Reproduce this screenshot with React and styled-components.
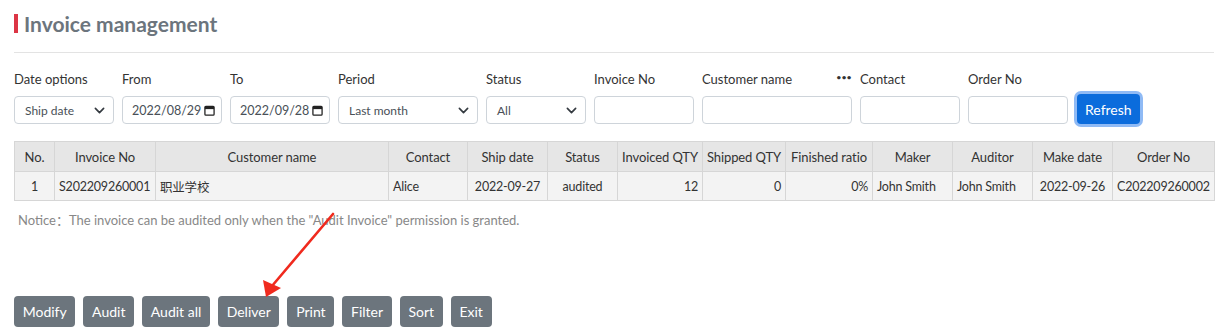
import React from 'react';
import styled, { createGlobalStyle } from 'styled-components';

const GlobalStyle = createGlobalStyle`
  body {
    margin: 0;
    background: #fff;
    font-family: Lato, "Noto Sans CJK SC", sans-serif;
    color: #333;
  }
`;

const Page = styled.div`
  position: relative;
  width: 1228px;
  height: 335px;
  padding: 14px 14px 0 14px;
  box-sizing: border-box;
  overflow: hidden;
`;

const Header = styled.div`
  display: flex;
  align-items: center;
  height: 19px;
  gap: 6px;
`;

const Bar = styled.span`
  width: 4px;
  height: 19px;
  background: #dc3545;
`;

const Title = styled.h1`
  margin: 0;
  font-size: 21px;
  line-height: 19px;
  font-weight: 700;
  color: #6c757d;
`;

const Divider = styled.div`
  height: 1px;
  background: #e3e3e3;
  margin-top: 19px;
  width: 1200px;
`;

const Filters = styled.div`
  display: flex;
  align-items: flex-end;
  gap: 8px;
  margin-top: 17px;
`;

const Field = styled.div`
  display: flex;
  flex-direction: column;
  gap: 8px;
  width: ${p => p.w || 100}px;
`;

const LabelRow = styled.div`
  display: flex;
  justify-content: space-between;
  align-items: center;
  height: 18px;
  font-size: 13px;
  color: #333;
`;

const More = styled.span`
  font-size: 8px;
  letter-spacing: 0.5px;
  font-weight: 700;
  color: #333;
  margin-top: -4px;
`;

const Box = styled.div`
  display: flex;
  align-items: center;
  justify-content: space-between;
  height: 28px;
  box-sizing: border-box;
  border: 1px solid #ced4da;
  border-radius: 4px;
  padding: 0 ${p => p.pr || 8}px 0 ${p => p.pl || 10}px;
  font-size: ${p => p.fs || 12}px;
  color: #495057;
  background: #fff;
`;

const RefreshButton = styled.button`
  height: 30px;
  padding: 0 8px;
  border: none;
  border-radius: 4px;
  background: #0b6cdc;
  color: #fff;
  font-family: inherit;
  font-size: 14px;
  box-shadow: 0 0 0 3px #8fbaf5;
  margin-left: 1px;
`;

const Table = styled.table`
  margin-top: 17px;
  border-collapse: collapse;
  font-size: 13px;
  color: #333;
  table-layout: fixed;
  width: 1200px;
`;

const Th = styled.th`
  background: #e6e6e6;
  font-weight: 400;
  height: 29px;
  padding: 0 3px;
  border: 1px solid #d6d6d6;
  text-align: center;
  white-space: nowrap;
  overflow: hidden;
  letter-spacing: -0.1px;
`;

const Td = styled.td`
  background: #f3f3f3;
  height: 28px;
  padding: 0 4px;
  border: 1px solid #d6d6d6;
  font-size: 12.5px;
  letter-spacing: -0.2px;
  text-align: ${p => p.align || 'left'};
  white-space: nowrap;
  overflow: hidden;
`;

const Notice = styled.p`
  margin: 11px 0 0 4px;
  font-size: 13px;
  line-height: 16px;
  color: #888;
`;

const Actions = styled.div`
  display: flex;
  gap: 8px;
  margin-top: 68px;
`;

const ActionButton = styled.button`
  height: 31px;
  padding: 0 8.7px;
  border: none;
  border-radius: 4px;
  background: #6c757d;
  color: #fff;
  font-family: inherit;
  font-size: 14px;
`;

const Arrow = styled.svg`
  position: absolute;
  left: 0;
  top: 0;
  pointer-events: none;
`;

const Chevron = () => (
  <svg width="11" height="11" viewBox="0 0 16 16">
    <path d="M2 5l6 6 6-6" fill="none" stroke="#343a40" strokeWidth="2.4" strokeLinecap="round" strokeLinejoin="round" />
  </svg>
);

const CalendarIcon = () => (
  <svg width="11" height="11" viewBox="0 0 12 12">
    <rect x="1" y="1.5" width="10" height="9.5" rx="1" fill="none" stroke="#222" strokeWidth="1.4" />
    <rect x="1" y="1.5" width="10" height="3" fill="#222" />
  </svg>
);

const columns = [
  { title: 'No.', w: 40 },
  { title: 'Invoice No', w: 101 },
  { title: 'Customer name', w: 233 },
  { title: 'Contact', w: 79 },
  { title: 'Ship date', w: 80 },
  { title: 'Status', w: 70 },
  { title: 'Invoiced QTY', w: 85 },
  { title: 'Shipped QTY', w: 83 },
  { title: 'Finished ratio', w: 87 },
  { title: 'Maker', w: 80 },
  { title: 'Auditor', w: 80 },
  { title: 'Make date', w: 80 },
  { title: 'Order No', w: 102 },
];

const row = [
  ['1', 'center'],
  ['S202209260001', 'left'],
  ['职业学校', 'left'],
  ['Alice', 'left'],
  ['2022-09-27', 'center'],
  ['audited', 'center'],
  ['12', 'right'],
  ['0', 'right'],
  ['0%', 'right'],
  ['John Smith', 'left'],
  ['John Smith', 'left'],
  ['2022-09-26', 'center'],
  ['C202209260002', 'left'],
];

const actions = ['Modify', 'Audit', 'Audit all', 'Deliver', 'Print', 'Filter', 'Sort', 'Exit'];

const App = () => {
  return (
    <Page>
      <GlobalStyle />
      <Header>
        <Bar />
        <Title>Invoice management</Title>
      </Header>
      <Divider />

      <Filters>
        <Field>
          <LabelRow>Date options</LabelRow>
          <Box>Ship date<Chevron /></Box>
        </Field>
        <Field>
          <LabelRow>From</LabelRow>
          <Box fs={12.5} pl={9} pr={6}>2022/08/29<CalendarIcon /></Box>
        </Field>
        <Field>
          <LabelRow>To</LabelRow>
          <Box fs={12.5} pl={9} pr={6}>2022/09/28<CalendarIcon /></Box>
        </Field>
        <Field w={140}>
          <LabelRow>Period</LabelRow>
          <Box>Last month<Chevron /></Box>
        </Field>
        <Field>
          <LabelRow>Status</LabelRow>
          <Box>All<Chevron /></Box>
        </Field>
        <Field>
          <LabelRow>Invoice No</LabelRow>
          <Box />
        </Field>
        <Field w={150}>
          <LabelRow>Customer name<More>•••</More></LabelRow>
          <Box />
        </Field>
        <Field>
          <LabelRow>Contact</LabelRow>
          <Box />
        </Field>
        <Field>
          <LabelRow>Order No</LabelRow>
          <Box />
        </Field>
        <RefreshButton>Refresh</RefreshButton>
      </Filters>

      <Table>
        <colgroup>
          {columns.map((c, i) => <col key={`col-${i}`} style={{ width: c.w }} />)}
        </colgroup>
        <thead>
          <tr>
            {columns.map((c, i) => <Th key={`th-${i}`}>{c.title}</Th>)}
          </tr>
        </thead>
        <tbody>
          <tr>
            {row.map(([v, a], i) => <Td key={`td-${i}`} align={a}>{v}</Td>)}
          </tr>
        </tbody>
      </Table>

      <Notice>Notice：The invoice can be audited only when the "Audit Invoice" permission is granted.</Notice>

      <Actions>
        {actions.map(a => <ActionButton key={a}>{a}</ActionButton>)}
      </Actions>

      <Arrow width="1228" height="335" viewBox="0 0 1228 335">
        <path d="M333 214 L272 286" stroke="#f02a1e" strokeWidth="2.6" strokeLinecap="round" fill="none" />
        <path d="M266 297 L263 280 L281 288 Z" fill="#f02a1e" />
      </Arrow>
    </Page>
  );
};

export default App;
